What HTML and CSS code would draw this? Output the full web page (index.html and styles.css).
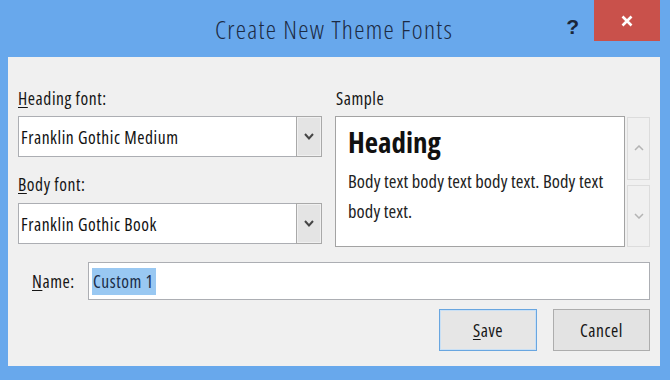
FILE: index.html
```html
<!DOCTYPE html>
<html lang="en">
<head>
<meta charset="utf-8">
<title>Create New Theme Fonts</title>
<link rel="stylesheet" href="styles.css">
</head>
<body>
<div class="window">
  <div class="titlebar">
    <div class="tb-spacer"></div>
    <div class="title">Create New Theme Fonts</div>
    <div class="controls">
      <span class="help">?</span>
      <div class="close">
        <svg width="12" height="12" viewBox="0 0 12 12"><path d="M1.5 1.5 L10.5 10.5 M10.5 1.5 L1.5 10.5" stroke="#fff" stroke-width="2.6" stroke-linecap="butt"/></svg>
      </div>
    </div>
  </div>
  <div class="content">
    <div class="top">
      <div class="fonts-col">
        <div class="lbl"><u>H</u>eading font:</div>
        <div class="combo">
          <span class="combo-val">Franklin Gothic Medium</span>
          <span class="drop"><svg width="10" height="7" viewBox="0 0 10 7"><path d="M1 1 L5 5.5 L9 1" fill="none" stroke="#454545" stroke-width="2"/></svg></span>
        </div>
        <div class="lbl lbl-body"><u>B</u>ody font:</div>
        <div class="combo">
          <span class="combo-val">Franklin Gothic Book</span>
          <span class="drop"><svg width="10" height="7" viewBox="0 0 10 7"><path d="M1 1 L5 5.5 L9 1" fill="none" stroke="#454545" stroke-width="2"/></svg></span>
        </div>
      </div>
      <div class="sample-col">
        <div class="lbl lbl-sample">Sample</div>
        <div class="sample-row">
          <div class="sample">
            <div class="sample-heading">Heading</div>
            <div class="sample-body">Body text body text body text. Body text body text.</div>
          </div>
          <div class="scroll">
            <div class="sbtn"><svg width="10" height="6" viewBox="0 0 10 6"><path d="M1 5 L5 1 L9 5" fill="none" stroke="#b4b4b4" stroke-width="1.5"/></svg></div>
            <div class="sbtn"><svg width="10" height="6" viewBox="0 0 10 6"><path d="M1 1 L5 5 L9 1" fill="none" stroke="#b4b4b4" stroke-width="1.5"/></svg></div>
          </div>
        </div>
      </div>
    </div>
    <div class="name-row">
      <span class="name-lbl"><u>N</u>ame:</span>
      <div class="name-input"><span class="sel">Custom 1</span></div>
    </div>
    <div class="btn-row">
      <div class="btn btn-default"><u>S</u>ave</div>
      <div class="btn">Cancel</div>
    </div>
  </div>
</div>
</body>
</html>
```

FILE: styles.css
```css
html, body {
  margin: 0;
  padding: 0;
  background: #6aa9ec;
}

.window {
  width: 670px;
  height: 380px;
  box-sizing: border-box;
  padding: 0 10px 14px 8px;
  background: #68a8ec;
  display: flex;
  flex-direction: column;
  font-family: "Open Sans", "Liberation Sans", sans-serif;
  font-stretch: 75%;
  letter-spacing: 0.55px;
  color: #151515;
}

.titlebar {
  height: 57px;
  flex: none;
  display: grid;
  grid-template-columns: 1fr auto 1fr;
}

.title {
  padding-top: 13px;
  font-weight: 300;
  font-size: 26px;
  letter-spacing: 1.25px;
  line-height: 32px;
  color: #1c2b44;
  white-space: nowrap;
}

.controls {
  display: flex;
  justify-content: flex-end;
  align-items: flex-start;
}

.help {
  margin-top: 15px;
  margin-right: 15px;
  font-family: "Liberation Sans", sans-serif;
  font-size: 21px;
  line-height: 24px;
  font-weight: bold;
  letter-spacing: 0;
  color: #1b2638;
}

.close {
  width: 66px;
  height: 41px;
  background: #c9514b;
  display: flex;
  align-items: center;
  justify-content: center;
}

.content {
  flex: 1;
  background: #f0f0f0;
  padding: 31px 10px 15px 10px;
  display: flex;
  flex-direction: column;
}

.top {
  display: grid;
  grid-template-columns: 304px 1fr;
  column-gap: 13px;
}

.lbl {
  font-size: 17.5px;
  line-height: 20px;
  margin-bottom: 8px;
  color: #151515;
}

.lbl-body {
  margin-top: 17px;
  margin-bottom: 9px;
}

.lbl-sample {
  padding-left: 1px;
}

u {
  text-decoration-thickness: 1px;
  text-underline-offset: 2px;
}

.combo {
  height: 41px;
  box-sizing: border-box;
  border: 1px solid #acaeb3;
  background: #fff;
  display: flex;
  align-items: center;
}

.combo-val {
  flex: 1;
  padding-left: 2px;
  font-size: 17.5px;
  color: #111;
  white-space: nowrap;
}

.drop {
  width: 26px;
  align-self: stretch;
  box-sizing: border-box;
  border: 1px solid #a9a9a9;
  margin: -1px -1px -1px 0;
  background: #e4e4e4;
  box-shadow: inset 0 0 0 1px #f0f0f0;
  display: flex;
  align-items: center;
  justify-content: center;
}

.sample-row {
  display: flex;
  gap: 2px;
}

.sample {
  flex: 1;
  height: 131px;
  box-sizing: border-box;
  border: 1px solid #a3a3a3;
  background: #fff;
  padding: 8px 12px 0 12px;
}

.sample-heading {
  font-size: 29px;
  line-height: 34px;
  font-weight: bold;
  letter-spacing: 0;
  color: #111;
}

.sample-body {
  margin-top: 7px;
  font-size: 18.5px;
  letter-spacing: 0.1px;
  line-height: 30px;
  color: #222;
}

.scroll {
  width: 23px;
  padding-top: 1px;
  display: flex;
  flex-direction: column;
  gap: 5px;
}

.sbtn {
  flex: 1;
  box-sizing: border-box;
  border: 1px solid #dcdcdc;
  background: #f0f0f0;
  display: flex;
  align-items: center;
  justify-content: center;
}

.name-row {
  margin-top: 15px;
  display: grid;
  grid-template-columns: 56px 1fr;
  align-items: center;
  padding-left: 14px;
}

.name-lbl {
  font-size: 17.5px;
  line-height: 20px;
  color: #151515;
}

.name-input {
  height: 38px;
  box-sizing: border-box;
  border: 1px solid #acaeb3;
  background: #fff;
  padding-left: 3px;
  display: flex;
  align-items: center;
}

.sel {
  background: #99c8f2;
  color: #1a2c48;
  font-size: 17.5px;
  line-height: 27px;
  padding: 0 2px 0 1px;
}

.btn-row {
  margin-top: 9px;
  display: flex;
  justify-content: flex-end;
  gap: 16px;
}

.btn {
  width: 97px;
  height: 42px;
  box-sizing: border-box;
  border: 1px solid #adadad;
  background: #e3e3e3;
  display: flex;
  align-items: center;
  justify-content: center;
  font-size: 17.5px;
  color: #151515;
}

.btn-default {
  width: 98px;
  border-color: #69a6e0;
  box-shadow: inset 0 0 0 1px #c9e0f5;
  background: #e6e6e6;
}
```
